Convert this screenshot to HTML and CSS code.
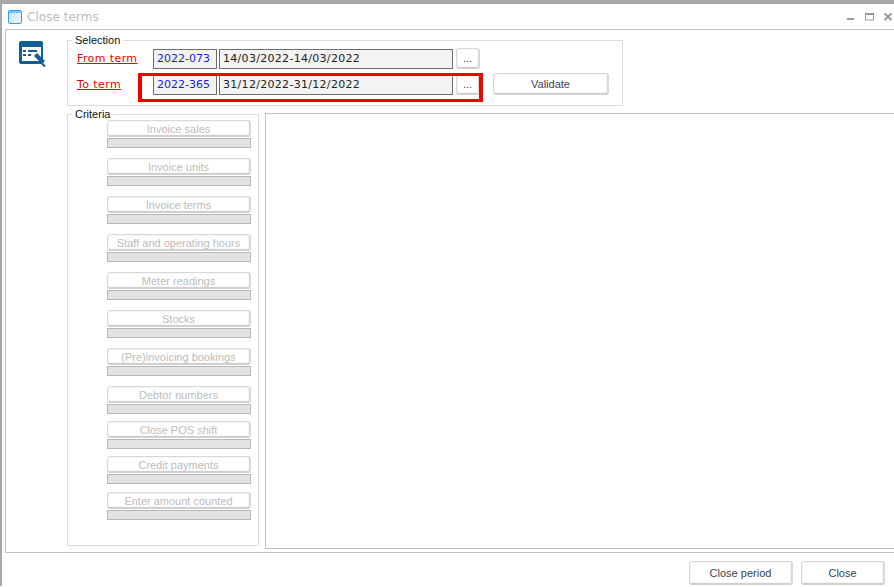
FILE: index.html
```html
<!DOCTYPE html>
<html lang="en">
<head>
<meta charset="utf-8">
<title>Close terms</title>
<link rel="stylesheet" href="styles.css">
</head>
<body>
<div class="window">
  <div class="titlebar">
    <svg class="app-icon" width="15" height="15" viewBox="0 0 15 15"><defs><linearGradient id="g" x1="0" y1="0" x2="1" y2="1"><stop offset="0" stop-color="#c9dcfb"/><stop offset="1" stop-color="#f4f7ff"/></linearGradient></defs><rect x="0.5" y="0.5" width="13" height="13" rx="1.5" fill="url(#g)" stroke="#2f9df0"/><rect x="1" y="1" width="12" height="2" fill="#7fc4f7"/></svg>
    <span class="title">Close terms</span>
    <div class="win-controls">
      <svg width="47" height="14" viewBox="0 0 47 14"><rect x="0" y="8" width="7" height="2" fill="#999"/><rect x="18.5" y="3.5" width="8" height="6.5" fill="none" stroke="#999"/><rect x="18" y="3" width="9" height="2" fill="#999"/><path d="M37.5 3.5l7 6.5M44.5 3.5l-7 6.5" stroke="#999" stroke-width="2" fill="none"/></svg>
    </div>
  </div>
  <div class="content">
    <div class="icon-col">
      <svg width="30" height="30" viewBox="0 0 30 30"><rect x="0" y="0" width="24" height="23" rx="2" fill="#0f5f96"/><rect x="3" y="6" width="19" height="14" fill="#fff"/><rect x="4" y="9" width="3" height="2" fill="#0f5f96"/><rect x="9" y="9" width="9" height="2" fill="#0f5f96"/><rect x="4" y="13" width="3" height="2" fill="#0f5f96"/><rect x="9" y="13" width="3" height="2" fill="#0f5f96"/><path d="M15 15l3-3 8 8-3 3z" fill="#0f5f96"/><path d="M24 22l3 3-2 1-3-3z" fill="#0f5f96"/></svg>
    </div>
    <div class="main">
      <fieldset class="selection">
        <legend>Selection</legend>
        <div class="sel-grid">
          <a class="term-link" href="#">From term</a>
          <div class="box code">2022-073</div>
          <div class="box date">14/03/2022-14/03/2022</div>
          <button class="btn dots">...</button>
          <span></span>
          <a class="term-link" href="#">To term</a>
          <div class="box code">2022-365</div>
          <div class="box date">31/12/2022-31/12/2022</div>
          <button class="btn dots">...</button>
          <button class="btn validate">Validate</button>
        </div>
        <div class="highlight"></div>
      </fieldset>
      <div class="lower">
        <fieldset class="criteria">
          <legend>Criteria</legend>
          <div class="item"><button class="btn crit" disabled>Invoice sales</button><div class="bar"></div></div>
          <div class="item"><button class="btn crit" disabled>Invoice units</button><div class="bar"></div></div>
          <div class="item"><button class="btn crit" disabled>Invoice terms</button><div class="bar"></div></div>
          <div class="item"><button class="btn crit" disabled>Staff and operating hours</button><div class="bar"></div></div>
          <div class="item"><button class="btn crit" disabled>Meter readings</button><div class="bar"></div></div>
          <div class="item"><button class="btn crit" disabled>Stocks</button><div class="bar"></div></div>
          <div class="item"><button class="btn crit" disabled>(Pre)invoicing bookings</button><div class="bar"></div></div>
          <div class="item tight"><button class="btn crit" disabled>Debtor numbers</button><div class="bar"></div></div>
          <div class="item tight"><button class="btn crit" disabled>Close POS shift</button><div class="bar"></div></div>
          <div class="item mid"><button class="btn crit" disabled>Credit payments</button><div class="bar"></div></div>
          <div class="item"><button class="btn crit" disabled>Enter amount counted</button><div class="bar"></div></div>
        </fieldset>
        <div class="panel"></div>
      </div>
    </div>
  </div>
  <div class="footer">
    <button class="btn period">Close period</button>
    <button class="btn close">Close</button>
  </div>
</div>
</body>
</html>
```
FILE: styles.css
```css
* { box-sizing: border-box; }
html, body { margin: 0; padding: 0; }
body { width: 894px; height: 587px; overflow: hidden; background: #fff; font-family: "DejaVu Sans", sans-serif; font-size: 11px; }
.window { height: 586px; display: flex; flex-direction: column; border-top: 4px solid #a8a8a8; border-left: 2px solid #a8a8a8; background: #fff; }
.titlebar { height: 26px; flex: none; display: flex; align-items: center; padding-left: 6px; }
.app-icon { flex: none; margin-right: 4px; margin-top: 1px; }
.title { font-size: 12px; letter-spacing: 0.05px; color: #bcbcbc; }
.win-controls { margin-left: auto; height: 14px; }
.win-controls svg { display: block; }
.content { height: 524px; flex: none; margin-left: 3px; margin-top: -1px; border-top: 1px solid #c0c0c0; border-left: 1px solid #c0c0c0; border-bottom: 1px solid #c0c0c0; display: flex; }
.icon-col { width: 61px; flex: none; padding: 11px 0 0 13px; }
.main { flex: 1; min-width: 0; display: flex; flex-direction: column; }
fieldset { margin: 0; padding: 0; border: 1px solid #dcdcdc; min-width: 0; }
legend { padding: 0 3px; margin-left: 4px; line-height: 13px; color: #111; font-family: "Liberation Sans", sans-serif; font-size: 11px; }
.selection { position: relative; width: 556px; height: 72px; margin-top: 4px; }
.sel-grid { display: grid; grid-template-columns: 76px 64px 236px 27px 129px; grid-template-rows: 21px 21px; row-gap: 5px; align-items: center; margin-left: 9px; padding-top: 1px; }
.term-link { color: #ee0000; text-decoration: underline; font-size: 11px; letter-spacing: 0.4px; }
.box { height: 20px; border: 1px solid #6e6e6e; background: #f3f3f3; line-height: 18px; padding-left: 3px; font-size: 11px; color: #222; letter-spacing: 0.3px; }
.code { color: #1a1ae6; width: 64px; letter-spacing: 0; }
.date { margin-left: 2px; width: 234px; }
.btn { font-family: "Liberation Sans", sans-serif; font-size: 11px; color: #3a3f55; background: #fff; border: 1px solid #d8d8d8; border-bottom: 2px solid #d0d0d0; border-right: 2px solid #d8d8d8; border-radius: 3px; padding: 0; box-shadow: inset 0 0 0 1px #f6f6f6; }
.dots { width: 24px; height: 21px; margin-left: 3px; }
.validate { width: 116px; height: 22px; margin-left: 13px; margin-top: -2px; padding-top: 2px; }
.highlight { position: absolute; left: 70px; top: 26px; width: 345px; height: 29px; border: 3px solid #f00000; border-left-width: 4px; border-right-width: 4px; }
.lower { display: flex; flex: 1; min-height: 0; }
.criteria { width: 193px; height: 438px; margin-top: 2px; }
.criteria legend { margin-bottom: -1px; }
.item { margin: 0 0 10px 39px; }
.item.tight { margin-bottom: 7px; }
.item.mid { margin-bottom: 8px; }
.crit { display: block; width: 144px; height: 17px; padding-top: 2px; color: #bcbcbc; line-height: 13px; }
.bar { width: 144px; height: 10px; margin-top: 1px; background: #e3e3e3; border: 1px solid #b8b8b8; }
.panel { flex: none; width: 629px; height: 436px; margin-top: 7px; margin-left: 6px; border: 1px solid #c0c0c0; border-right: none; }
.footer { flex: 1; display: flex; justify-content: flex-end; align-items: flex-start; padding: 8px 9px 0 0; gap: 8px; }
.period { width: 104px; height: 24px; padding-top: 1px; }
.close { width: 84px; height: 24px; padding-top: 1px; }
```
